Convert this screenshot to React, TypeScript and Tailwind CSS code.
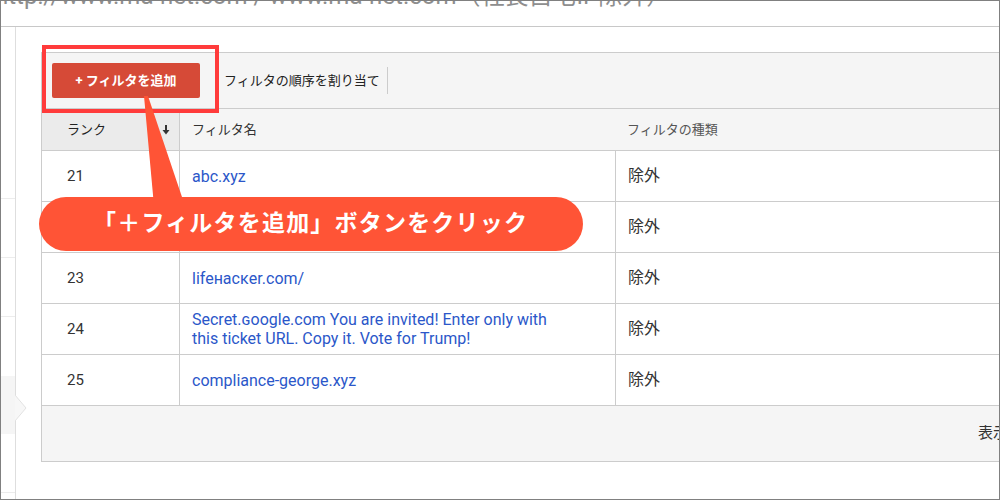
const rows = [
  { rank: '21', name: 'abc.xyz', type: '除外' },
  { rank: '22', name: '', type: '除外' },
  { rank: '23', name: 'lifeнacĸer.com/', type: '除外' },
  { rank: '24', name: 'Secret.ɢoogle.com You are invited! Enter only with', name2: 'this ticket URL. Copy it. Vote for Trump!', type: '除外' },
  { rank: '25', name: 'compliance-george.xyz', type: '除外' },
];

const font = "font-['Roboto','Noto_Sans_CJK_JP',sans-serif]";

export default function App() {
  return (
    <div className={`relative h-[500px] w-[1000px] overflow-hidden border border-[#808080] bg-white ${font}`}>
      {/* view title, scrolled off the top */}
      <div className="h-[26px] overflow-hidden border-b border-[#c8c8c8]">
        <div className="-ml-[6px] -mt-[17px] whitespace-nowrap text-[24px] leading-[24px] text-[#8e8e8e]">
          http://www.ma-net.com / www.ma-net.com（社長自宅IP除外）
        </div>
      </div>

      <div className="flex h-[472px]">
        {/* left nav strip */}
        <div className="flex w-[15px] shrink-0 flex-col border-r border-[#dedede]">
          <div className="h-[172px] border-b border-[#ececec]" />
          <div className="h-[59px] border-b border-[#ececec]" />
          <div className="h-[59px] border-b border-[#ececec]" />
          <div className="h-[59px]" />
          <div className="h-[58px] bg-[#f5f5f5]" />
          <div className="h-[59px] border-b border-[#ececec]" />
        </div>

        {/* main */}
        <div className="flex-1 pl-[25px] pt-[25px]">
          <div className="w-[1080px] border border-[#cccccc]">
            {/* toolbar */}
            <div className="flex h-[56px] items-center border-b border-[#cccccc] bg-[#f5f5f5] pl-[10px]">
              <button className="h-[35px] w-[148px] rounded-[2px] bg-[#d64a37] text-[13px] font-bold text-white">
                + フィルタを追加
              </button>
              <span className="ml-[24px] text-[13px] text-[#222]">フィルタの順序を割り当て</span>
              <div className="ml-[7px] h-[27px] w-px bg-[#cccccc]" />
            </div>

            {/* header */}
            <div className="flex h-[42px] border-b border-[#cccccc] bg-[#f5f5f5] text-[13px]">
              <div className="flex w-[138px] items-center justify-between border-r border-[#cccccc] bg-[#ebebeb] pl-[25px] pr-[9px] text-[#222]">
                <span>ランク</span>
                <svg width="8" height="10" viewBox="0 0 8 10">
                  <path d="M4 0v6" stroke="#333" strokeWidth="2" />
                  <path d="M0.5 5h7L4 9.5z" fill="#333" />
                </svg>
              </div>
              <div className="flex w-[436px] items-center border-r border-[#f5f5f5] pl-[12px] text-[#333]">フィルタ名</div>
              <div className="flex flex-1 items-center pl-[11px] text-[#555]">フィルタの種類</div>
            </div>

            {/* rows */}
            {rows.map((r) => (
              <div key={r.rank} className="flex h-[51px] border-b border-[#cccccc]">
                <div className="flex w-[138px] items-center border-r border-[#cccccc] pl-[25px] text-[15px] text-[#333]">{r.rank}</div>
                <div className="flex w-[436px] flex-col justify-center border-r border-[#cccccc] pl-[12px] text-[16px] leading-[19px] text-[#2b57c9]">
                  {r.name ? <span>{r.name}</span> : null}
                  {r.name2 ? <span>{r.name2}</span> : null}
                </div>
                <div className="flex flex-1 items-center pl-[12px] text-[16px] text-[#333]">{r.type}</div>
              </div>
            ))}

            {/* footer */}
            <div className="flex h-[55px] items-center whitespace-nowrap bg-[#f5f5f5] pl-[936px] text-[15px] text-[#333]">
              表示する行数:
            </div>
          </div>
        </div>
      </div>

      {/* nav notch */}
      <svg className="absolute left-[14px] top-[394px]" width="12" height="26" viewBox="0 0 12 26">
        <path d="M0 0 L11 13 L0 26" fill="#f7f7f7" stroke="#e2e2e2" strokeWidth="1" />
      </svg>

      {/* annotation: highlight box */}
      <div className="absolute left-[41px] top-[44px] h-[68px] w-[177px] border-[4px] border-[#ff3b3b]" />

      {/* annotation: pointer */}
      <svg className="absolute left-0 top-0" width="1000" height="500" viewBox="0 0 1000 500">
        <polygon points="143,95 147,95 184,205 153,205" fill="#ff5436" />
      </svg>

      {/* annotation: callout */}
      <div className="absolute left-[38px] top-[196px] flex h-[54px] w-[544px] items-center rounded-full bg-[#ff5436] pl-[54px] text-[23px] font-bold tracking-[1.2px] text-white">
        「＋フィルタを追加」ボタンをクリック
      </div>
    </div>
  );
}
